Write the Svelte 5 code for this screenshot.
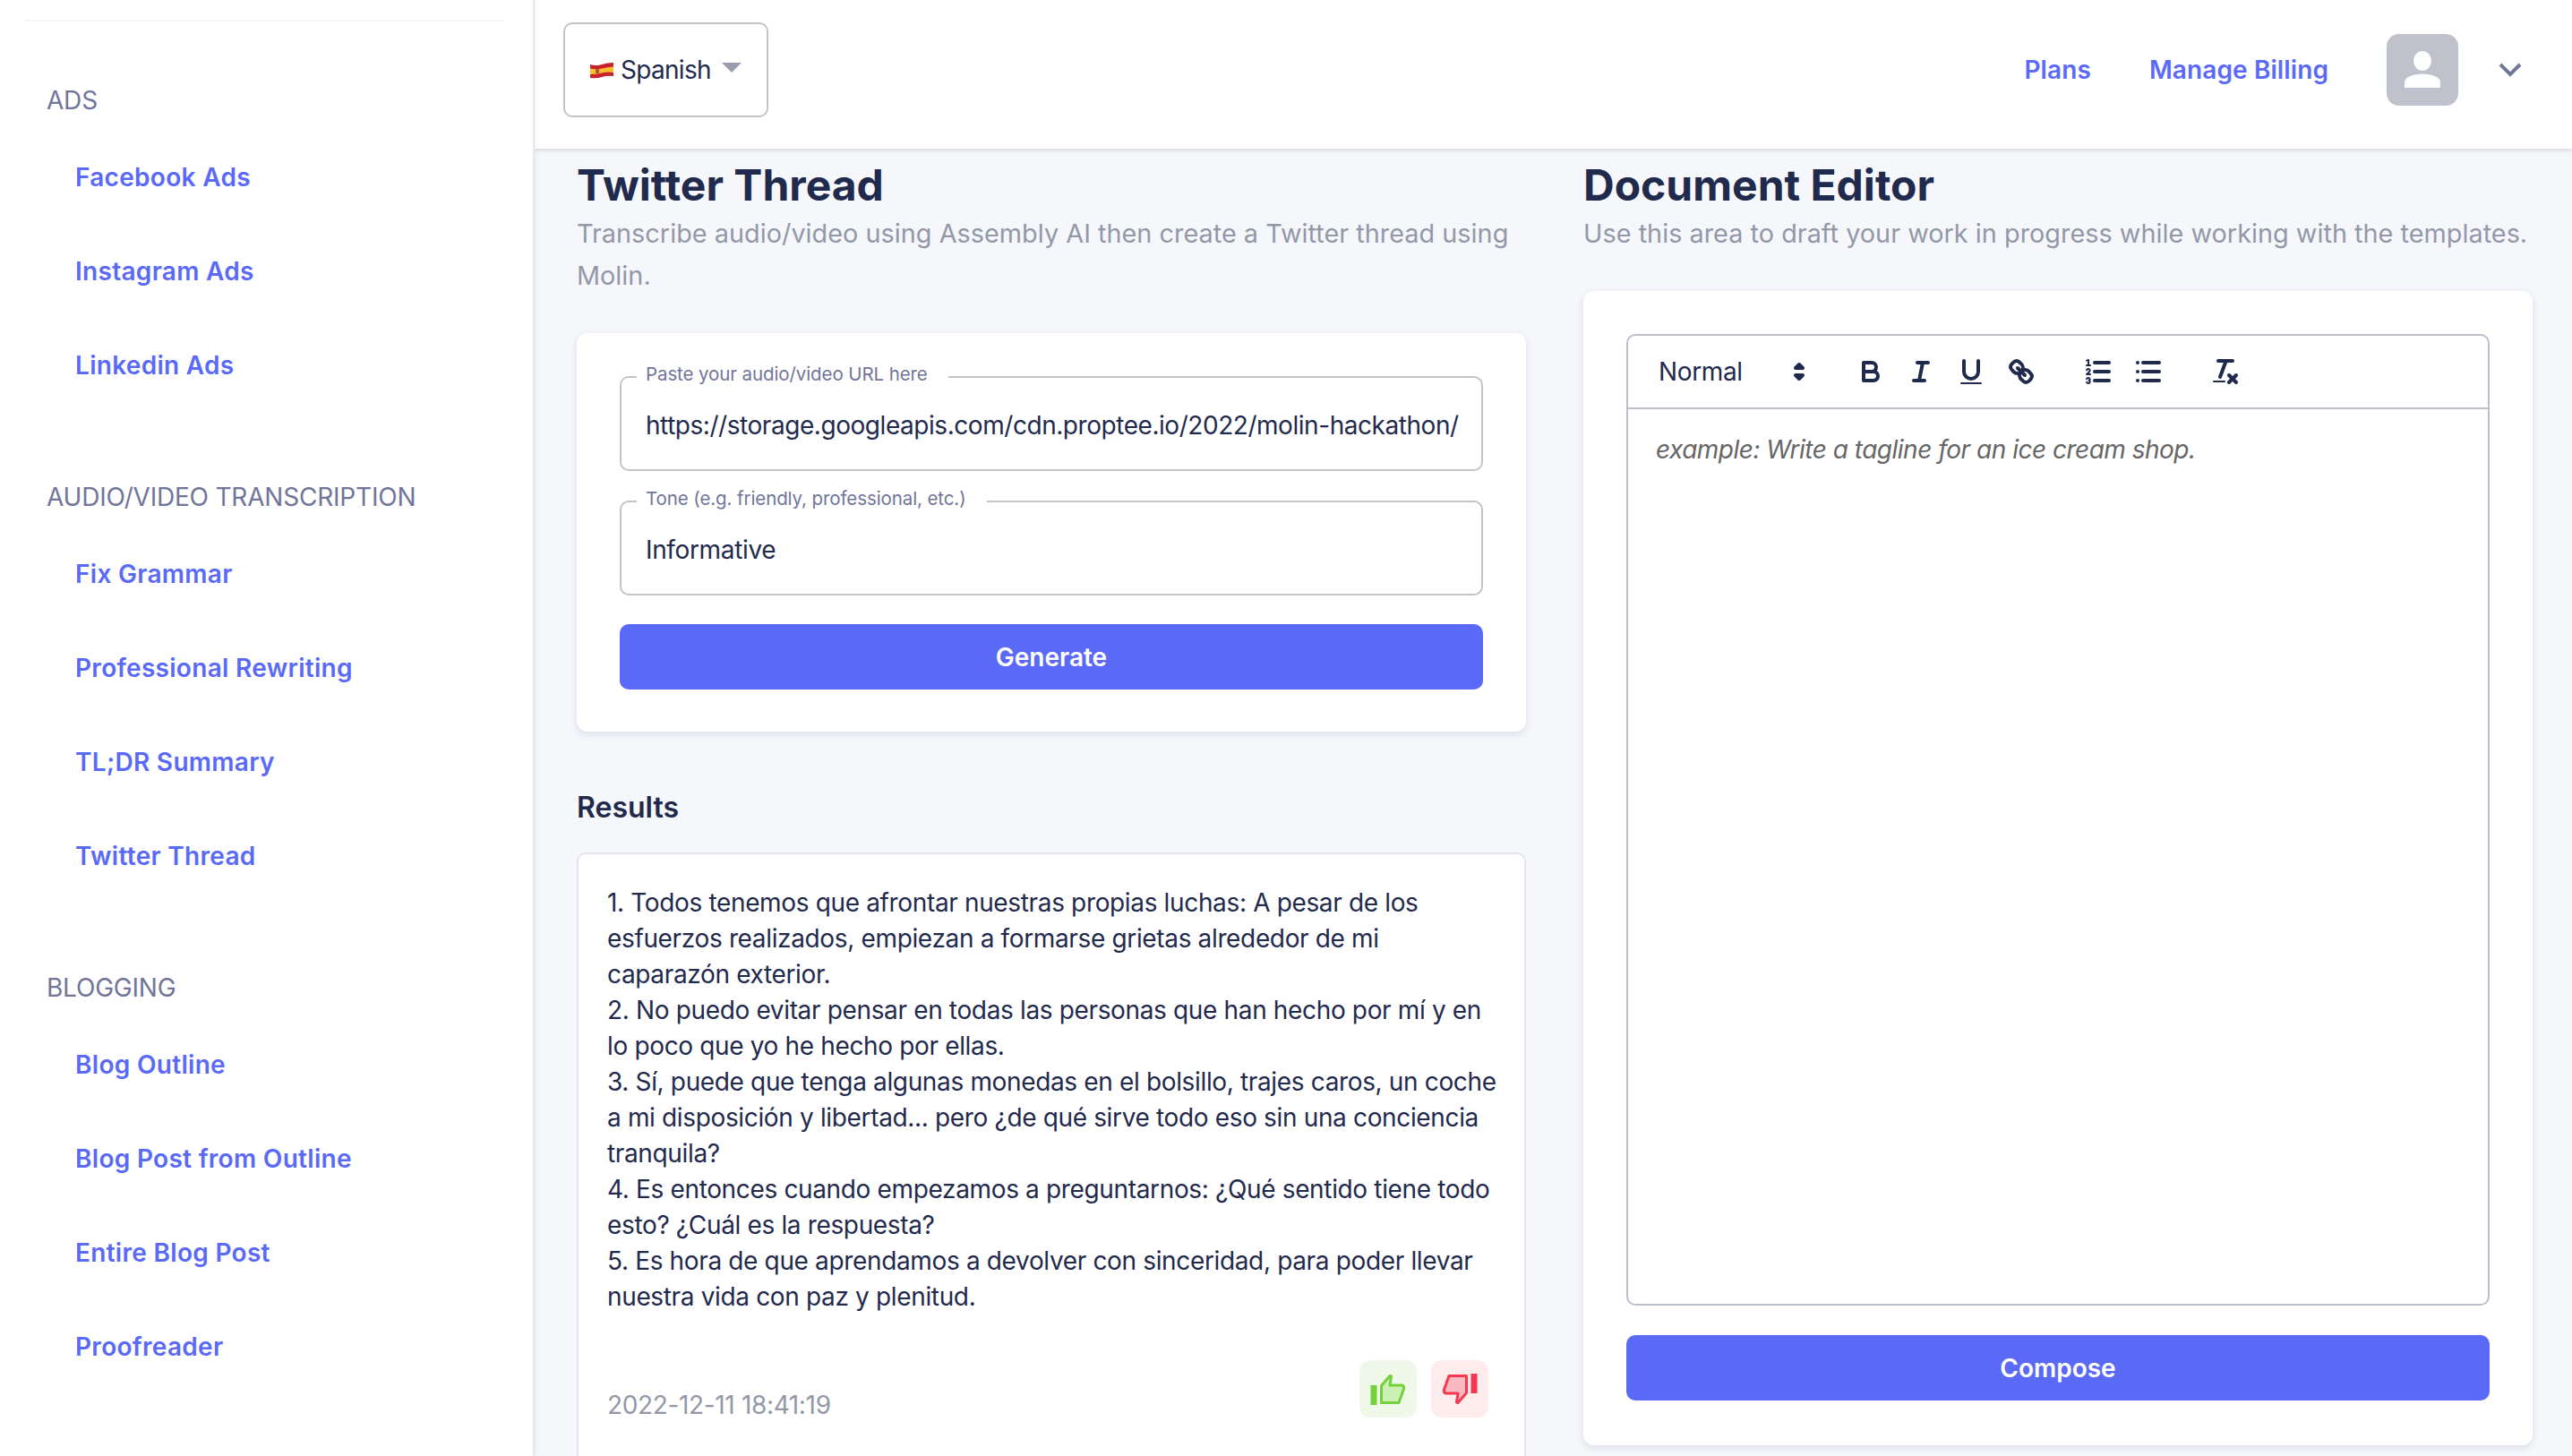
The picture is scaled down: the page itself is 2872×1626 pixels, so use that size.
<script>
  const sections = [
    { title: "ADS", items: ["Facebook Ads", "Instagram Ads", "Linkedin Ads"] },
    {
      title: "AUDIO/VIDEO TRANSCRIPTION",
      items: ["Fix Grammar", "Professional Rewriting", "TL;DR Summary", "Twitter Thread"],
    },
    {
      title: "BLOGGING",
      items: ["Blog Outline", "Blog Post from Outline", "Entire Blog Post", "Proofreader"],
    },
  ];

  const results = [
    "1. Todos tenemos que afrontar nuestras propias luchas: A pesar de los esfuerzos realizados, empiezan a formarse grietas alrededor de mi caparazón exterior.",
    "2. No puedo evitar pensar en todas las personas que han hecho por mí y en lo poco que yo he hecho por ellas.",
    "3. Sí, puede que tenga algunas monedas en el bolsillo, trajes caros, un coche a mi disposición y libertad... pero ¿de qué sirve todo eso sin una conciencia tranquila?",
    "4. Es entonces cuando empezamos a preguntarnos: ¿Qué sentido tiene todo esto? ¿Cuál es la respuesta?",
    "5. Es hora de que aprendamos a devolver con sinceridad, para poder llevar nuestra vida con paz y plenitud.",
  ];
</script>

<div class="page">
  <aside class="sidebar">
    <div class="sidebar-rule"></div>
    {#each sections as section}
      <section class="nav-section">
        <div class="nav-title">{section.title}</div>
        {#each section.items as item}
          <div class="nav-link">{item}</div>
        {/each}
      </section>
    {/each}
  </aside>

  <div class="right">
    <header class="topbar">
      <div class="lang-select">
        <svg class="flag" viewBox="0 0 26 19" width="26" height="19">
          <path d="M0 3Q7 5 13 3T26 1V16Q19 15 13 17T0 18z" fill="#c8202c" />
          <path d="M0 7.500Q7 9 13 7.500T26 5.500V12Q19 11 13 12.500T0 14z" fill="#f6c02c" />
          <rect x="6" y="8" width="4" height="5" rx="1" fill="#b5533c" />
        </svg>
        <span class="lang-name">Spanish</span>
        <svg class="caret" viewBox="0 0 22 11" width="22" height="11">
          <polygon points="0,0 22,0 11,11" fill="#9a9dac" />
        </svg>
      </div>
      <nav class="top-links">
        <span class="top-link">Plans</span>
        <span class="top-link">Manage Billing</span>
      </nav>
      <div class="avatar">
        <svg viewBox="0 0 80 80" width="80" height="80">
          <ellipse cx="40" cy="30" rx="10" ry="11" fill="#fff" />
          <path d="M20 60v-6c0-6 10-9.500 20-9.500s20 3.500 20 9.500v6z" fill="#fff" />
        </svg>
      </div>
      <svg class="chevron" viewBox="0 0 26 16" width="26" height="16">
        <path d="M2 2l11 11L24 2" fill="none" stroke="#71759a" stroke-width="4" />
      </svg>
    </header>

    <main class="content">
      <div class="column">
        <h1>Twitter Thread</h1>
        <p class="subtitle">Transcribe audio/video using Assembly AI then create a Twitter thread using Molin.</p>
        <div class="card form-card">
          <fieldset>
            <legend>Paste your audio/video URL here</legend>
            <div class="value url">https://storage.googleapis.com/cdn.proptee.io/2022/molin-hackathon/</div>
          </fieldset>
          <fieldset class="second">
            <legend>Tone (e.g. friendly, professional, etc.)</legend>
            <div class="value">Informative</div>
          </fieldset>
          <button class="primary generate" type="button">Generate</button>
        </div>

        <h2>Results</h2>
        <div class="result-box">
          <div class="result-text">
            {#each results as line}
              <div>{line}</div>
            {/each}
          </div>
          <div class="result-foot">
            <span class="stamp">2022-12-11 18:41:19</span>
            <div class="votes">
              <div class="vote up">
                <svg viewBox="0 0 40 37" width="40" height="37">
                  <rect x="0.500" y="14" width="7" height="22" fill="#73d13d" />
                  <path d="M12.500 33.500V14.500L22 3.500l1.500 .5L22 14H35q2.500 0 2.500 2.500V18L32 33.500z" fill="#cdf0b4" stroke="#73d13d" stroke-width="3" stroke-linejoin="round" />
                </svg>
              </div>
              <div class="vote down">
                <svg viewBox="0 0 40 37" width="40" height="37">
                  <g transform="rotate(180 20 18.500)">
                    <rect x="0.500" y="14" width="7" height="22" fill="#f5384f" />
                    <path d="M12.500 33.500V14.500L22 3.500l1.500 .5L22 14H35q2.500 0 2.500 2.500V18L32 33.500z" fill="#f9b9c0" stroke="#f5384f" stroke-width="3" stroke-linejoin="round" />
                  </g>
                </svg>
              </div>
            </div>
          </div>
        </div>
      </div>

      <div class="column">
        <h1>Document Editor</h1>
        <p class="subtitle">Use this area to draft your work in progress while working with the templates.</p>
        <div class="card editor-card">
          <div class="editor">
            <div class="toolbar">
              <div class="picker">
                <span>Normal</span>
                <svg viewBox="0 0 18 18" width="36" height="36">
                  <polygon class="tip" points="7 11 9 13 11 11 7 11" />
                  <polygon class="tip" points="7 7 9 5 11 7 7 7" />
                </svg>
              </div>
              <div class="tool-group">
                <svg class="tool" viewBox="0 0 18 18">
                  <path d="M5,4H9.500A2.500,2.500,0,0,1,12,6.500v0A2.500,2.500,0,0,1,9.500,9H5V4Z" />
                  <path d="M5,9h5.500A2.500,2.500,0,0,1,13,11.500v0A2.500,2.500,0,0,1,10.500,14H5V9Z" />
                </svg>
                <svg class="tool" viewBox="0 0 18 18">
                  <line x1="7" x2="13" y1="4" y2="4" />
                  <line x1="5" x2="11" y1="14" y2="14" />
                  <line x1="8" x2="10" y1="14" y2="4" />
                </svg>
                <svg class="tool" viewBox="0 0 18 18">
                  <path d="M5,3V9a4.012,4.012,0,0,0,4,4H9a4.012,4.012,0,0,0,4-4V3" />
                  <rect class="solid" height="1" rx="0.500" ry="0.500" width="12" x="3" y="15" />
                </svg>
                <svg class="tool" viewBox="0 0 18 18">
                  <line x1="7" x2="11" y1="7" y2="11" />
                  <path d="M8.900,4.577a3.476,3.476,0,0,1,.36,4.679A3.476,3.476,0,0,1,4.577,8.900C3.185,7.500,2.035,6.400,4.217,4.217S7.500,3.185,8.900,4.577Z" />
                  <path d="M13.423,9.100a3.476,3.476,0,0,0-4.679-.36,3.476,3.476,0,0,0,.36,4.679c1.392,1.392,2.500,2.542,4.679.36S14.815,10.500,13.423,9.100Z" />
                </svg>
              </div>
              <div class="tool-group">
                <svg class="tool" viewBox="0 0 18 18">
                  <line x1="7" x2="15" y1="4" y2="4" />
                  <line x1="7" x2="15" y1="9" y2="9" />
                  <line x1="7" x2="15" y1="14" y2="14" />
                  <line class="thin" x1="2.500" x2="4.500" y1="5.500" y2="5.500" />
                  <path class="solid" d="M3.500,6A0.500,0.500,0,0,1,3,5.500V3.085l-0.276.138A0.500,0.500,0,0,1,2.053,3c-0.124-.247-0.023-0.324.224-0.447l1-.5A0.500,0.500,0,0,1,4,2.500v3A0.500,0.500,0,0,1,3.500,6Z" />
                  <path class="thin" d="M4.500,10.500h-2c0-.234,1.850-1.076,1.850-2.234A0.959,0.959,0,0,0,2.500,8.156" />
                  <path class="thin" d="M2.500,14.846a0.959,0.959,0,0,0,1.850-.109A0.700,0.700,0,0,0,3.750,14a0.688,0.688,0,0,0,.6-0.736,0.959,0.959,0,0,0-1.850-.109" />
                </svg>
                <svg class="tool" viewBox="0 0 18 18">
                  <line x1="6" x2="15" y1="4" y2="4" />
                  <line x1="6" x2="15" y1="9" y2="9" />
                  <line x1="6" x2="15" y1="14" y2="14" />
                  <line x1="3" x2="3" y1="4" y2="4" />
                  <line x1="3" x2="3" y1="9" y2="9" />
                  <line x1="3" x2="3" y1="14" y2="14" />
                </svg>
              </div>
              <div class="tool-group">
                <svg class="tool" viewBox="0 0 18 18">
                  <line x1="5" x2="13" y1="3" y2="3" />
                  <line x1="6" x2="9.350" y1="12" y2="3" />
                  <line x1="11" x2="15" y1="11" y2="15" />
                  <line x1="15" x2="11" y1="11" y2="15" />
                  <rect class="solid" height="1" rx="0.500" ry="0.500" width="7" x="2" y="14" />
                </svg>
              </div>
            </div>
            <div class="editor-body">example: Write a tagline for an ice cream shop.</div>
          </div>
          <button class="primary compose" type="button">Compose</button>
        </div>
      </div>
    </main>
  </div>
</div>

<style>
  :global(body) {
    margin: 0;
    background: #f5f7fb;
  }

  .page {
    display: flex;
    width: 2872px;
    height: 1626px;
    overflow: hidden;
    font-family: Inter, "Noto Sans", sans-serif;
    color: #1f2a4d;
    font-size: 28px;
    letter-spacing: -0.35px;
  }

  .sidebar {
    flex: none;
    box-sizing: border-box;
    width: 597px;
    padding: 22px 32px 0 28px;
    background: #fff;
    border-right: 2px solid #e6e8f0;
    box-shadow: 2px 0 4px rgba(40, 50, 90, 0.06);
    position: relative;
    z-index: 2;
  }

  .sidebar-rule {
    height: 2px;
    background: #f5f6fa;
    margin-bottom: 66px;
  }

  .nav-section {
    padding-left: 24px;
    margin-bottom: 72px;
  }

  .nav-title {
    height: 44px;
    line-height: 44px;
    margin-bottom: 12px;
    color: #71759a;
    white-space: nowrap;
    letter-spacing: -0.2px;
  }

  .nav-link {
    height: 105px;
    line-height: 105px;
    padding-left: 32px;
    color: #5a6af7;
    font-weight: 600;
    white-space: nowrap;
    letter-spacing: 0.3px;
  }

  .right {
    flex: 1;
    min-width: 0;
    display: flex;
    flex-direction: column;
  }

  .topbar {
    flex: none;
    display: flex;
    align-items: center;
    height: 166px;
    box-sizing: border-box;
    padding: 0 56px 10px 32px;
    background: #fff;
    box-shadow: 0 2px 4px rgba(40, 50, 90, 0.16);
    position: relative;
    z-index: 1;
  }

  .lang-select {
    display: flex;
    align-items: center;
    box-sizing: border-box;
    width: 229px;
    height: 106px;
    padding: 0 24px 0 28px;
    border: 2px solid #c4c4c4;
    border-radius: 10px;
    white-space: nowrap;
  }

  .flag {
    flex: none;
    margin-right: 8px;
  }

  .lang-name {
    letter-spacing: -0.7px;
  }

  .caret {
    flex: none;
    margin-left: 12px;
    margin-bottom: 6px;
  }

  .top-links {
    display: flex;
    gap: 65px;
    margin-left: auto;
  }

  .top-link {
    color: #5a6af7;
    font-weight: 600;
    letter-spacing: 0.1px;
  }

  .avatar {
    width: 80px;
    height: 80px;
    margin-left: 65px;
    border-radius: 14px;
    background: #bfc2cc;
  }

  .chevron {
    margin-left: 45px;
  }

  .content {
    flex: 1;
    display: grid;
    grid-template-columns: 1060px 1060px;
    gap: 64px;
    padding: 11px 0 0 47px;
    min-height: 0;
  }

  .column {
    min-width: 0;
  }

  h1 {
    margin: 0;
    height: 60px;
    line-height: 60px;
    font-size: 48px;
    font-weight: 700;
    color: #1f2a4d;
    letter-spacing: 0;
  }

  .subtitle {
    margin: 0 0 41px;
    line-height: 47px;
    color: #9398a9;
    font-size: 28.8px;
    letter-spacing: 0.03px;
  }

  .card {
    box-sizing: border-box;
    background: #fff;
    border-radius: 12px;
    box-shadow: 0 3px 8px rgba(40, 50, 90, 0.12);
  }

  .form-card {
    padding: 34px 48px 47px;
  }

  fieldset {
    margin: 0;
    padding: 0 27px;
    min-width: 0;
    border: 2px solid #c4c4c4;
    border-radius: 10px;
  }

  fieldset.second {
    margin-top: 19px;
  }

  legend {
    margin-left: -10px;
    padding: 0 23px 4px 10px;
    height: 26px;
    line-height: 24px;
    font-size: 20.500px;
    letter-spacing: -0.1px;
    color: #71759a;
    white-space: nowrap;
  }

  .value {
    height: 75px;
    padding-top: 1px;
    padding-bottom: 12px;
    line-height: 76px;
    white-space: nowrap;
  }

  .url {
    letter-spacing: -0.45px;
  }

  .primary {
    display: block;
    width: 100%;
    height: 73px;
    border: 0;
    border-radius: 10px;
    background: #5a6af7;
    color: #fff;
    font: 600 28px Inter, "Noto Sans", sans-serif;
  }

  .generate {
    margin-top: 32px;
  }

  h2 {
    margin: 65px 0 30px;
    height: 40px;
    line-height: 40px;
    font-size: 32px;
    font-weight: 600;
    letter-spacing: 0;
  }

  .result-box {
    padding: 34px 28px 60px 32px;
    background: #fff;
    border: 2px solid #e3e5ec;
    border-radius: 10px;
  }

  .result-text {
    line-height: 40px;
  }

  .result-foot {
    display: flex;
    justify-content: space-between;
    align-items: flex-end;
    margin-top: 51px;
    padding-right: 12px;
  }

  .stamp {
    color: #9398a9;
    line-height: 28px;
  }

  .votes {
    display: flex;
    gap: 16px;
  }

  .vote {
    display: flex;
    align-items: center;
    justify-content: center;
    width: 64px;
    height: 64px;
    border-radius: 12px;
  }

  .up {
    background: #f0f9e9;
  }

  .down {
    background: #ffeced;
  }

  .editor-card {
    height: 1289px;
    padding: 48px;
  }

  .editor {
    box-sizing: border-box;
    height: 1085px;
    border: 2px solid #bcc0cd;
    border-radius: 10px;
    display: flex;
    flex-direction: column;
  }

  .toolbar {
    flex: none;
    box-sizing: border-box;
    height: 82px;
    display: flex;
    align-items: center;
    padding: 0 16px;
    border-bottom: 2px solid #bcc0cd;
  }

  .picker {
    flex: none;
    box-sizing: border-box;
    width: 196px;
    margin-right: 31px;
    display: flex;
    align-items: center;
    justify-content: space-between;
    padding: 0 3px 0 18px;
  }

  .tool-group {
    display: flex;
    margin-right: 30px;
  }

  .tool {
    display: block;
    width: 56px;
    height: 36px;
    fill: none;
    stroke: #1f2a4d;
    stroke-width: 2;
    stroke-linecap: round;
    stroke-linejoin: round;
  }

  .tool .solid {
    fill: #1f2a4d;
    stroke: none;
  }

  .tool .thin {
    stroke-width: 1;
  }

  .tip {
    fill: #1f2a4d;
    stroke: #1f2a4d;
    stroke-width: 2;
    stroke-linejoin: round;
  }

  .editor-body {
    flex: 1;
    padding: 24px 31px;
    line-height: 42px;
    font-style: italic;
    color: #666;
    letter-spacing: -0.5px;
  }

  .compose {
    margin-top: 33px;
    letter-spacing: 0;
  }
</style>
